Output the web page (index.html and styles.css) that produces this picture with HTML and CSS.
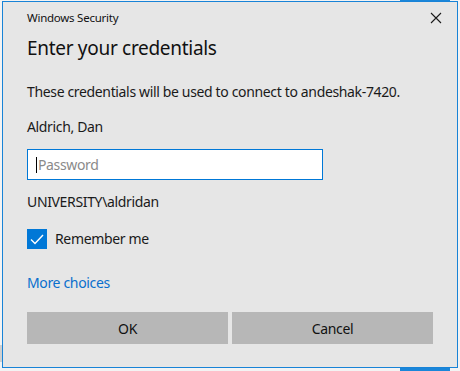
FILE: index.html
```html
<!DOCTYPE html>
<html>
<head>
<meta charset="utf-8">
<link rel="stylesheet" href="styles.css">
</head>
<body>
<div class="desk desk-top"></div>
<div class="desk desk-bottom"></div>
<div class="desk desk-left"></div>
<div class="dialog">
  <div class="titlebar">
    <span class="title">Windows Security</span>
    <span class="close">
      <svg width="12" height="12" viewBox="0 0 12 12"><path d="M1 1 L11 11 M11 1 L1 11" stroke="#1a1a1a" stroke-width="1.1" fill="none"/></svg>
    </span>
  </div>
  <h1 class="heading">Enter your credentials</h1>
  <p class="text para">These credentials will be used to connect to andeshak-7420.</p>
  <p class="text name">Aldrich, Dan</p>
  <div class="input"><span class="caret"></span><span class="placeholder">Password</span></div>
  <p class="text domain">UNIVERSITY\aldridan</p>
  <div class="check-row">
    <span class="checkbox">
      <svg width="20" height="20" viewBox="0 0 20 20"><path d="M4 10.5 L8 14.5 L16 6" stroke="#fff" stroke-width="1.4" fill="none"/></svg>
    </span>
    <span class="text">Remember me</span>
  </div>
  <p class="text link">More choices</p>
  <div class="buttons">
    <div class="btn">OK</div>
    <div class="btn">Cancel</div>
  </div>
</div>
</body>
</html>
```
FILE: styles.css
```css
html, body {
  margin: 0;
  padding: 0;
}
body {
  position: relative;
  background: #f3f3f3;
  width: 460px;
  height: 371px;
  overflow: hidden;
  font-family: "Noto Sans", "Open Sans", sans-serif;
  color: #1a1a1a;
}
.desk {
  position: absolute;
}
.desk-top {
  left: 400px;
  top: 0;
  width: 50px;
  height: 1px;
  background: #1a86d9;
}
.desk-bottom {
  left: 400px;
  top: 367px;
  width: 50px;
  height: 4px;
  background: #1a86d9;
}
.desk-left {
  left: 0;
  top: 345px;
  width: 2px;
  height: 17px;
  background: #d0d0d0;
}
.dialog {
  position: relative;
  margin-left: 2px;
  margin-top: 1px;
  width: 456px;
  height: 367px;
  box-sizing: border-box;
  background: #e6e6e6;
  border: 1px solid #1883d7;
  padding: 0 0 0 24px;
  display: flex;
  flex-direction: column;
}
.titlebar {
  height: 31px;
  display: flex;
  align-items: center;
  justify-content: space-between;
  padding-right: 15px;
}
.title {
  font-size: 11.5px;
  letter-spacing: -0.25px;
  color: #111;
}
.close {
  display: flex;
  width: 12px;
  height: 12px;
}
.heading {
  margin: 0;
  font-weight: normal;
  font-size: 19px;
  letter-spacing: -0.3px;
  line-height: 30px;
  height: 30px;
  color: #111;
}
.text {
  margin: 0;
  font-size: 14px;
  letter-spacing: -0.35px;
  line-height: 20px;
  height: 20px;
  white-space: nowrap;
}
.para { margin-top: 19px; }
.name { margin-top: 15px; }
.input {
  margin-top: 12px;
  width: 296px;
  height: 31px;
  box-sizing: border-box;
  border: 1px solid #0078d7;
  background: #fff;
  display: flex;
  align-items: center;
  padding-left: 8px;
}
.caret {
  width: 1px;
  height: 16px;
  background: #000;
}
.placeholder {
  font-size: 14px;
  letter-spacing: -0.35px;
  color: #8a8a8a;
  margin-left: 1px;
}
.domain { margin-top: 12px; }
.check-row {
  margin-top: 17px;
  display: flex;
  align-items: center;
  gap: 8px;
  height: 20px;
}
.checkbox {
  width: 20px;
  height: 20px;
  background: #0078d7;
  display: flex;
}
.link {
  margin-top: 24px;
  color: #0a6fcd;
}
.buttons {
  margin-top: 19px;
  display: flex;
  gap: 4px;
}
.btn {
  width: 201px;
  height: 32px;
  background: #b7b7b7;
  display: flex;
  align-items: center;
  justify-content: center;
  font-size: 14px;
  letter-spacing: -0.35px;
  color: #111;
}
```
